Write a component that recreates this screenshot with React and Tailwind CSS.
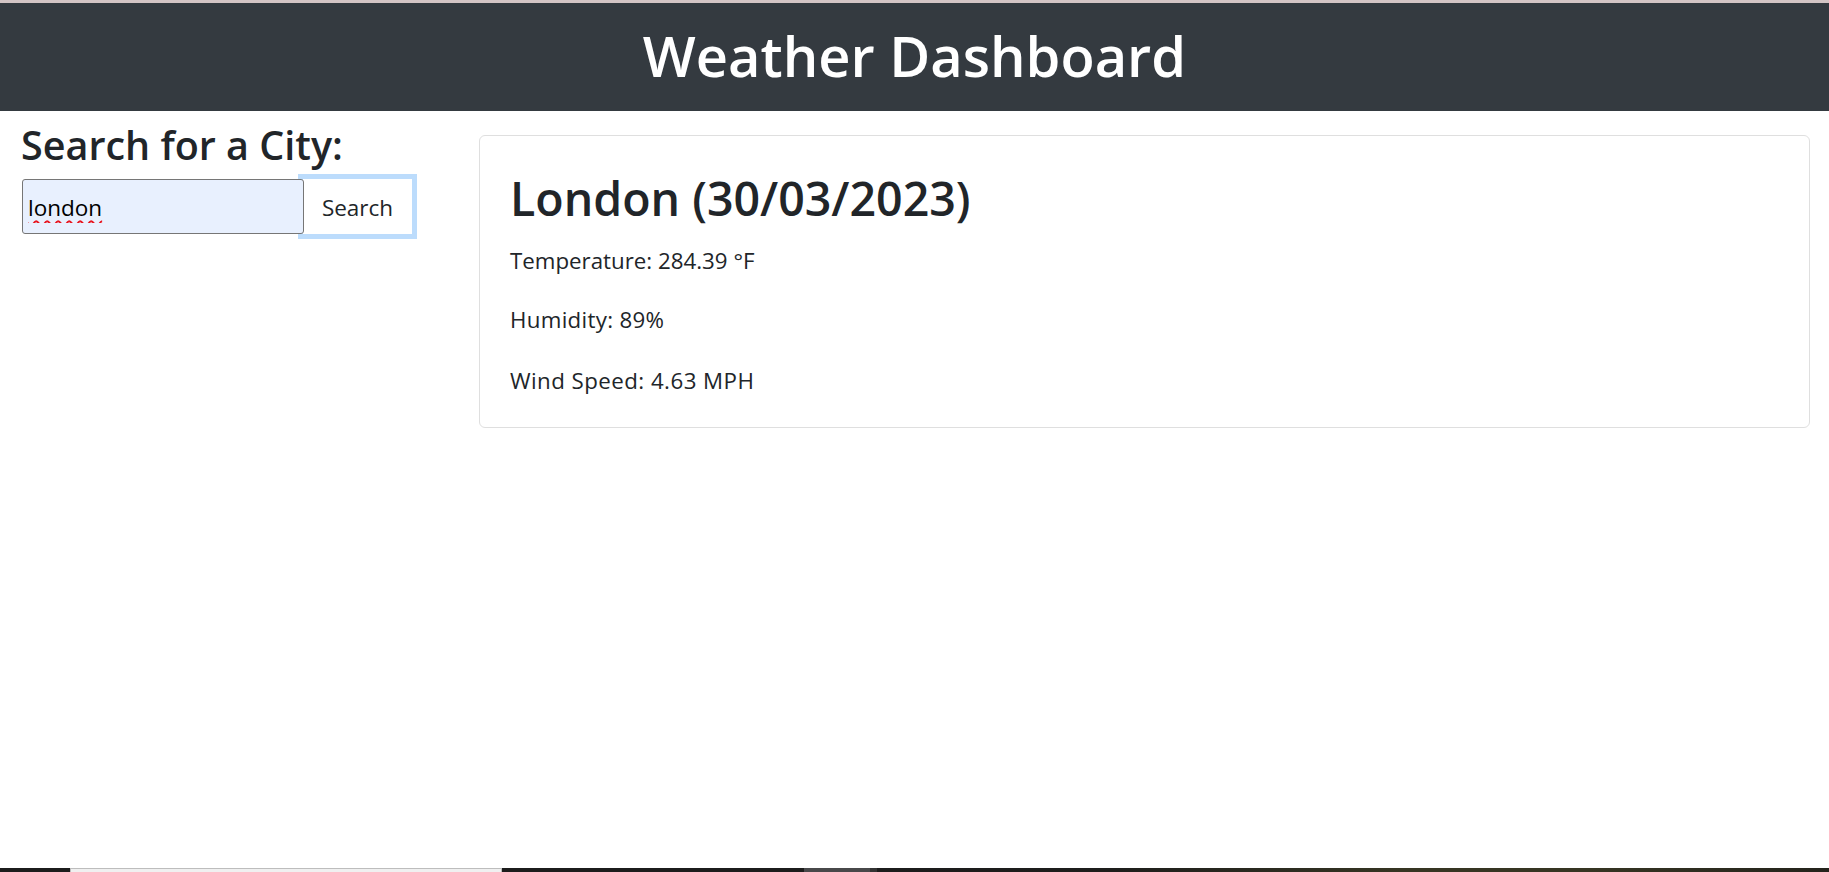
import React from "react";

const FONT = '"Open Sans", "Noto Sans", Arial, sans-serif';

export default function App() {
  return (
    <div className="h-screen flex flex-col bg-white text-[#212529]" style={{ fontFamily: FONT }}>
      <div className="h-[3px] bg-[#d3c5c5] shrink-0" />
      <header className="h-[108px] shrink-0 bg-[#343a40] flex justify-center pt-[16px]">
        <h1 className="text-[56px] leading-[72px] font-semibold text-white">Weather Dashboard</h1>
      </header>

      <main className="flex-1 flex min-h-0">
        <aside className="w-[457px] shrink-0 pl-[21px] pr-[22px] pt-[9px]">
          <h3 className="text-[39.5px] leading-[50px] font-semibold">Search for a City:</h3>
          <div className="mt-[9px] flex items-stretch h-[55px]">
            <input
              defaultValue="london"
              spellCheck={false}
              className="relative z-20 ml-[1px] w-[282px] h-full bg-[#e8f0fe] border border-[#767676] rounded-[3px] pl-[5px] pt-[2px] text-[22.5px] text-black outline-none underline decoration-wavy decoration-[#e8141e] decoration-[1.5px] underline-offset-[4px]"
              style={{ fontFamily: FONT }}
            />
            <button className="relative z-10 -ml-[1px] w-[109px] h-full bg-white text-[22.5px] text-[#212529] shadow-[0_0_0_5px_#bcdcfc] pt-[2px]">
              Search
            </button>
          </div>
        </aside>

        <section className="flex-1 pl-[22px] pr-[19px] pt-[24px]">
          <div className="border-[1.5px] border-[#dfdfdf] rounded-[6px] px-[30px] pt-[33px] pb-[28px]">
            <h2 className="text-[46.5px] leading-[58px] font-semibold">London (30/03/2023)</h2>
            <p className="mt-[16px] text-[22.3px] leading-[36px]">Temperature: 284.39 °F</p>
            <p className="mt-[23px] text-[22.3px] leading-[36px] tracking-[0.3px]">Humidity: 89%</p>
            <p className="mt-[25px] text-[22.3px] leading-[36px] tracking-[0.45px]">Wind Speed: 4.63 MPH</p>
          </div>
        </section>
      </main>

      <footer className="h-[4px] shrink-0 flex">
        <div className="w-[70px] bg-[#1c1c1c]" />
        <div className="w-[432px] bg-[#f0f0f0] border-t border-x border-[#bdbdbd]" />
        <div className="w-[302px] bg-[#1c1c1c]" />
        <div className="w-[66px] bg-[#48484a]" />
        <div className="w-[7px] bg-[#333333]" />
        <div className="flex-1 bg-[linear-gradient(90deg,#1c1c1c_0%,#1e1e1c_25%,#363523_55%,#363523_75%,#24231c_100%)]" />
      </footer>
    </div>
  );
}
